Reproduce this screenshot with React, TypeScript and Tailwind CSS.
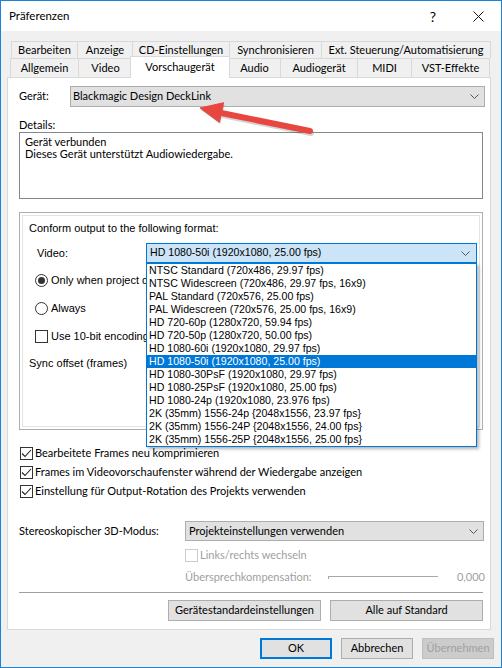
import React from 'react';

const ui = "font-['Lato',sans-serif] text-[11px]";
const ms = "font-['Liberation_Sans',Arial,sans-serif]";

const topTabs = [
  { label: 'Bearbeiten', w: 'w-[66px]' },
  { label: 'Anzeige', w: 'w-[55px]' },
  { label: 'CD-Einstellungen', w: 'w-[97px]' },
  { label: 'Synchronisieren', w: 'w-[92px]' },
  { label: 'Ext. Steuerung/Automatisierung', w: 'w-[170px]' },
];

const bottomTabs = [
  { label: 'Allgemein', w: 'w-[68px]' },
  { label: 'Video', w: 'w-[54px]' },
  { label: 'Vorschaugerät', w: 'w-[96px]', active: true },
  { label: 'Audio', w: 'w-[52px]' },
  { label: 'Audiogerät', w: 'w-[77px]' },
  { label: 'MIDI', w: 'w-[54px]' },
  { label: 'VST-Effekte', w: 'w-[79px]' },
];

const formats = [
  'NTSC Standard (720x486, 29.97 fps)',
  'NTSC Widescreen (720x486, 29.97 fps, 16x9)',
  'PAL Standard (720x576, 25.00 fps)',
  'PAL Widescreen (720x576, 25.00 fps, 16x9)',
  'HD 720-60p (1280x720, 59.94 fps)',
  'HD 720-50p (1280x720, 50.00 fps)',
  'HD 1080-60i (1920x1080, 29.97 fps)',
  'HD 1080-50i (1920x1080, 25.00 fps)',
  'HD 1080-30PsF (1920x1080, 29.97 fps)',
  'HD 1080-25PsF (1920x1080, 25.00 fps)',
  'HD 1080-24p (1920x1080, 23.976 fps)',
  '2K (35mm) 1556-24p {2048x1556, 23.97 fps}',
  '2K (35mm) 1556-24P {2048x1556, 24.00 fps}',
  '2K (35mm) 1556-25P {2048x1556, 25.00 fps}',
];

const Chevron = () => (
  <svg width="9" height="5" viewBox="0 0 9 5" className="shrink-0">
    <path d="M0.5 0.5 L4.5 4.5 L8.5 0.5" fill="none" stroke="#555" strokeWidth="1" />
  </svg>
);

const CheckBox = ({ checked, disabled }: { checked?: boolean; disabled?: boolean }) => (
  <span
    className={
      disabled
        ? 'w-[13px] h-[13px] border border-[#cccccc] bg-white flex items-center justify-center shrink-0'
        : 'w-[13px] h-[13px] border border-[#333333] bg-white flex items-center justify-center shrink-0'
    }
  >
    {checked && (
      <svg width="11" height="9" viewBox="0 0 11 9">
        <path d="M1 4.5 L4 7.5 L10 1" fill="none" stroke="#222" strokeWidth="1.1" />
      </svg>
    )}
  </span>
);

const Radio = ({ checked }: { checked?: boolean }) => (
  <span className="w-[13px] h-[13px] rounded-full border border-[#333333] bg-white flex items-center justify-center shrink-0">
    {checked && <span className="w-[7px] h-[7px] rounded-full bg-[#333333]" />}
  </span>
);

export default function App() {
  return (
    <div className={`w-[502px] h-[668px] border border-[#1883d7] bg-[#f0f0f0] flex flex-col relative text-black ${ui}`}>
      {/* Title bar */}
      <div className="h-[30px] bg-white flex items-center pl-[8px] shrink-0">
        <span className="text-[11.5px]">Präferenzen</span>
        <div className="ml-auto flex items-center h-full">
          <span className="w-[46px] text-center text-[14px]">?</span>
          <span className="w-[45px] flex items-center justify-center">
            <svg width="11" height="11" viewBox="0 0 11 11">
              <path d="M0.5 0.5 L10.5 10.5 M10.5 0.5 L0.5 10.5" stroke="#111" strokeWidth="1" />
            </svg>
          </span>
        </div>
      </div>

      {/* Body */}
      <div className="flex-1 flex flex-col pt-[10px]">
        {/* Tabs */}
        <div className="flex ml-[10px]">
          {topTabs.map((t, i) => (
            <div
              key={t.label}
              className={`${t.w} h-[17px] border-t border-l border-[#d9d9d9] flex items-center justify-center whitespace-nowrap ${i === topTabs.length - 1 ? 'border-r' : ''}`}
            >
              {t.label}
            </div>
          ))}
        </div>
        <div className="flex ml-[9px] items-start">
          {bottomTabs.map((t, i) =>
            t.active ? (
              <div
                key={t.label}
                className="w-[100px] h-[22px] -mx-[2px] -mt-[2px] -mb-px relative z-10 bg-white border border-b-0 border-[#d9d9d9] flex items-center justify-center whitespace-nowrap"
              >
                {t.label}
              </div>
            ) : (
              <div
                key={t.label}
                className={`${t.w} h-[19px] border-t border-l border-[#d9d9d9] flex items-center justify-center whitespace-nowrap ${i === bottomTabs.length - 1 ? 'border-r' : ''}`}
              >
                {t.label}
              </div>
            )
          )}
        </div>

        {/* Panel */}
        <div className="ml-[6px] w-[484px] h-[553px] border border-[#d9d9d9] bg-white pl-[11px] flex flex-col">
          <div className="mt-[8px] h-[21px] flex items-center">
            <span className="w-[51px]">Gerät:</span>
            <div className="w-[415px] h-[21px] bg-[#e1e1e1] border border-[#adadad] flex items-center justify-between pl-[2px] pr-[5px]">
              <span>Blackmagic Design DeckLink</span>
              <Chevron />
            </div>
          </div>

          <div className="mt-[11px] h-[14px] leading-[14px]">Details:</div>
          <div className="w-[464px] h-[67px] border border-[#828790] bg-white pl-[5px] pt-[3px] leading-[12px]">
            <div className="h-[12px]">Gerät verbunden</div>
            <div className="h-[12px]">Dieses Gerät unterstützt Audiowiedergabe.</div>
          </div>

          {/* Group */}
          <div className="mt-[13px] w-[464px] h-[218px] border border-[#adadad] p-[2px]">
            <div className={`h-full border border-[#e3e3e3] pl-[6px] flex flex-col ${ms} text-[11px]`}>
              <div className="mt-[5px] h-[14px] leading-[14px]">Conform output to the following format:</div>
              <div className="mt-[8px] h-[20px] flex items-center">
                <span className="ml-[8px] w-[109px]">Video:</span>
                <div className="w-[331px] h-[20px] relative border border-[#0078d7] bg-[#cce4f7] flex items-center justify-between pl-[3px] pr-[6px]">
                  <span className="text-[10.6px]">HD 1080-50i (1920x1080, 25.00 fps)</span>
                  <Chevron />
                  <div className="absolute left-[-1px] top-[19px] w-[331px] h-[184px] border border-[#0078d7] bg-white z-20 shadow-[2px_2px_3px_rgba(0,0,0,0.3)] text-[10.6px]">
                    {formats.map((f) => (
                      <div
                        key={f}
                        className={
                          f === 'HD 1080-50i (1920x1080, 25.00 fps)'
                            ? 'h-[13px] leading-[13px] pl-[2px] bg-[#0078d7] text-white whitespace-nowrap'
                            : 'h-[13px] leading-[13px] pl-[2px] whitespace-nowrap'
                        }
                      >
                        {f}
                      </div>
                    ))}
                  </div>
                </div>
              </div>
              <div className="mt-[10px] h-[14px] flex items-center">
                <span className="ml-[6px]"><Radio checked /></span>
                <span className="ml-[3px] w-[95px] overflow-hidden whitespace-nowrap">Only when project data does not match</span>
              </div>
              <div className="mt-[14px] h-[14px] flex items-center">
                <span className="ml-[6px]"><Radio /></span>
                <span className="ml-[3px]">Always</span>
              </div>
              <div className="mt-[14px] h-[14px] flex items-center">
                <span className="ml-[6px]"><CheckBox /></span>
                <span className="ml-[3px] w-[95px] overflow-hidden whitespace-nowrap">Use 10-bit encoding</span>
              </div>
              <div className="mt-[13px] h-[14px] leading-[14px]">Sync offset (frames)</div>
            </div>
          </div>

          {/* Options */}
          <div className="mt-[14px] flex flex-col">
            {[
              'Bearbeitete Frames neu komprimieren',
              'Frames im Videovorschaufenster während der Wiedergabe anzeigen',
              'Einstellung für Output-Rotation des Projekts verwenden',
            ].map((l) => (
              <div key={l} className="h-[19px] flex items-center">
                <span className="ml-[1px]"><CheckBox checked /></span>
                <span className="ml-[2px] whitespace-nowrap">{l}</span>
              </div>
            ))}
          </div>

          <div className="mt-[20px] h-[20px] flex items-center">
            <span className="w-[166px]">Stereoskopischer 3D-Modus:</span>
            <div className="w-[299px] h-[20px] bg-[#e1e1e1] border border-[#adadad] flex items-center justify-between pl-[3px] pr-[5px]">
              <span>Projekteinstellungen verwenden</span>
              <Chevron />
            </div>
          </div>
          <div className="mt-[7px] h-[14px] flex items-center text-[#a0a0a0]">
            <span className="ml-[166px]"><CheckBox disabled /></span>
            <span className="ml-[2px]">Links/rechts wechseln</span>
          </div>
          <div className="mt-[8px] h-[14px] w-[466px] flex items-center text-[#a0a0a0]">
            <span className="ml-[166px] w-[143px] whitespace-nowrap">Übersprechkompensation:</span>
            <span className="w-[110px] h-[3px] border-t border-l border-[#a8a8a8] mt-[1px]" />
            <span className="ml-auto">0,000</span>
          </div>
          <div className="mt-[8px] h-px w-[464px] bg-[#a0a0a0]" />
          <div className="mt-[7px] w-[464px] flex justify-end gap-[9px]">
            <div className="w-[153px] h-[21px] bg-[#e1e1e1] border border-[#adadad] flex items-center justify-center">
              Gerätestandardeinstellungen
            </div>
            <div className="w-[153px] h-[21px] bg-[#e1e1e1] border border-[#adadad] flex items-center justify-center">
              Alle auf Standard
            </div>
          </div>
        </div>

        {/* Dialog buttons */}
        <div className="mt-[8px] flex justify-end pr-[7px] gap-[9px]">
          <div className="w-[72px] h-[21px] bg-[#e1e1e1] border-2 border-[#0078d7] flex items-center justify-center">OK</div>
          <div className="w-[72px] h-[21px] bg-[#e1e1e1] border border-[#adadad] flex items-center justify-center">Abbrechen</div>
          <div className="w-[72px] h-[21px] bg-[#cccccc] border border-[#bfbfbf] text-[#a0a0a0] flex items-center justify-center">Übernehmen</div>
        </div>
      </div>

      {/* Annotation arrow */}
      <svg className="absolute -left-px -top-px pointer-events-none z-30" width="502" height="668" viewBox="0 0 502 668">
        <g opacity="0.25" transform="translate(1 2)">
          <line x1="219" y1="112.5" x2="310" y2="131" stroke="#555" strokeWidth="6" strokeLinecap="round" />
          <polygon points="200,108 223.6,102.7 219.4,122.3" fill="#555" />
        </g>
        <line x1="219" y1="112.5" x2="310" y2="131" stroke="#e8473f" strokeWidth="6" strokeLinecap="round" />
        <polygon points="200,108 223.6,102.7 219.4,122.3" fill="#e8473f" strokeLinejoin="round" stroke="#e8473f" strokeWidth="1" />
      </svg>
    </div>
  );
}
